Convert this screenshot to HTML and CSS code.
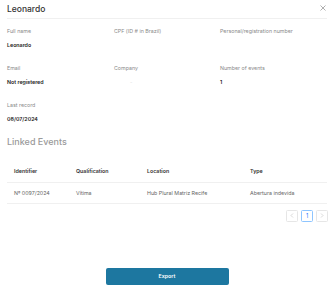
FILE: index.html
```html
<!DOCTYPE html>
<html lang="en">
<head>
  <meta charset="UTF-8" />
  <meta name="viewport" content="width=device-width, initial-scale=1.0"/>
  <title>Leonardo</title>
  <link rel="stylesheet" href="styles.css">
</head>
<body>
  <div class="modal">
    <header class="modal-header">
      <h1>Leonardo</h1>
      <span class="close">
        <svg width="6" height="6" viewBox="0 0 6 6"><path d="M0.5 0.5L5.5 5.5M5.5 0.5L0.5 5.5" stroke="#9a9a9a" stroke-width="0.8"/></svg>
      </span>
    </header>

    <div class="info-grid">
      <div class="field">
        <div class="label">Full name</div>
        <div class="value">Leonardo</div>
      </div>
      <div class="field">
        <div class="label">CPF (ID # in Brazil)</div>
        <div class="value"></div>
      </div>
      <div class="field">
        <div class="label">Personal/registration number</div>
        <div class="value"></div>
      </div>
      <div class="field">
        <div class="label">Email</div>
        <div class="value">Not registered</div>
      </div>
      <div class="field">
        <div class="label">Company</div>
        <div class="value dim">-</div>
      </div>
      <div class="field">
        <div class="label">Number of events</div>
        <div class="value">1</div>
      </div>
      <div class="field">
        <div class="label">Last record</div>
        <div class="value">08/07/2024</div>
      </div>
    </div>

    <h2 class="section-title">Linked Events</h2>

    <table class="events">
      <thead>
        <tr>
          <th class="col-id">Identifier</th>
          <th class="col-qual">Qualification</th>
          <th class="col-loc">Location</th>
          <th>Type</th>
        </tr>
      </thead>
      <tbody>
        <tr>
          <td>Nº 0097/2024</td>
          <td>Vítima</td>
          <td>Hub Plural Matriz Recife</td>
          <td>Abertura indevida</td>
        </tr>
      </tbody>
    </table>

    <div class="pagination">
      <span class="page-btn disabled">
        <svg width="4" height="5" viewBox="0 0 4 5"><path d="M3 0.5L1 2.5L3 4.5" fill="none" stroke="#c8c8c8" stroke-width="0.7"/></svg>
      </span>
      <span class="page-btn active">1</span>
      <span class="page-btn disabled">
        <svg width="4" height="5" viewBox="0 0 4 5"><path d="M1 0.5L3 2.5L1 4.5" fill="none" stroke="#c8c8c8" stroke-width="0.7"/></svg>
      </span>
    </div>

    <div class="footer">
      <button class="export">Export</button>
    </div>
  </div>
</body>
</html>
```

FILE: styles.css
```css
* {
  box-sizing: border-box;
}

body {
  margin: 0;
  background-color: #fff;
  font-family: Inter, "Liberation Sans", sans-serif;
  color: #222;
}

.modal {
  padding: 0 7px;
}

.modal-header {
  display: flex;
  justify-content: space-between;
  align-items: center;
  height: 19px;
  border-bottom: 1px solid #f0f0f0;
}

.modal-header h1 {
  margin: 0;
  font-size: 8.5px;
  font-weight: 500;
  color: #333;
  line-height: 18px;
}

.close {
  display: flex;
  margin-right: 1px;
  margin-top: -2px;
}

.info-grid {
  display: grid;
  grid-template-columns: 107px 106px 1fr;
  row-gap: 15px;
  padding-top: 8px;
}

.label {
  font-size: 5.3px;
  line-height: 8px;
  color: #8a8a8a;
}

.value {
  margin-top: 6px;
  height: 8px;
  font-size: 5.3px;
  line-height: 8px;
  font-weight: 600;
  color: #222;
}

.value.dim {
  color: #ddd;
  font-weight: 400;
  padding-left: 16px;
}

.section-title {
  margin: 13px 0 0;
  font-size: 9px;
  line-height: 12px;
  font-weight: 500;
  color: #9a9a9a;
}

.events {
  width: 100%;
  margin-top: 13px;
  border-collapse: collapse;
  font-size: 5.3px;
}

.events th,
.events td {
  height: 21px;
  padding: 0 0 0 7px;
  text-align: left;
  border-bottom: 1px solid #f0f0f0;
}

.events th {
  font-weight: 600;
  color: #333;
}

.events td {
  color: #666;
}

.col-id {
  width: 62px;
}

.col-qual {
  width: 71px;
}

.col-loc {
  width: 103px;
}

.pagination {
  display: flex;
  justify-content: flex-end;
  gap: 3px;
  margin-top: 6px;
  margin-right: -1px;
}

.page-btn {
  display: flex;
  align-items: center;
  justify-content: center;
  width: 12px;
  height: 12px;
  border: 1px solid #e6e6e6;
  border-radius: 1.5px;
  font-size: 5.5px;
  color: #1677ff;
}

.page-btn.active {
  border-color: #8ec5ff;
}

.footer {
  display: flex;
  justify-content: center;
  margin-top: 46px;
}

.export {
  width: 123px;
  height: 17px;
  border: none;
  border-radius: 2px;
  background-color: #1d77a0;
  color: #fff;
  font-family: Inter, "Liberation Sans", sans-serif;
  font-size: 5.3px;
  font-weight: 600;
}
```
